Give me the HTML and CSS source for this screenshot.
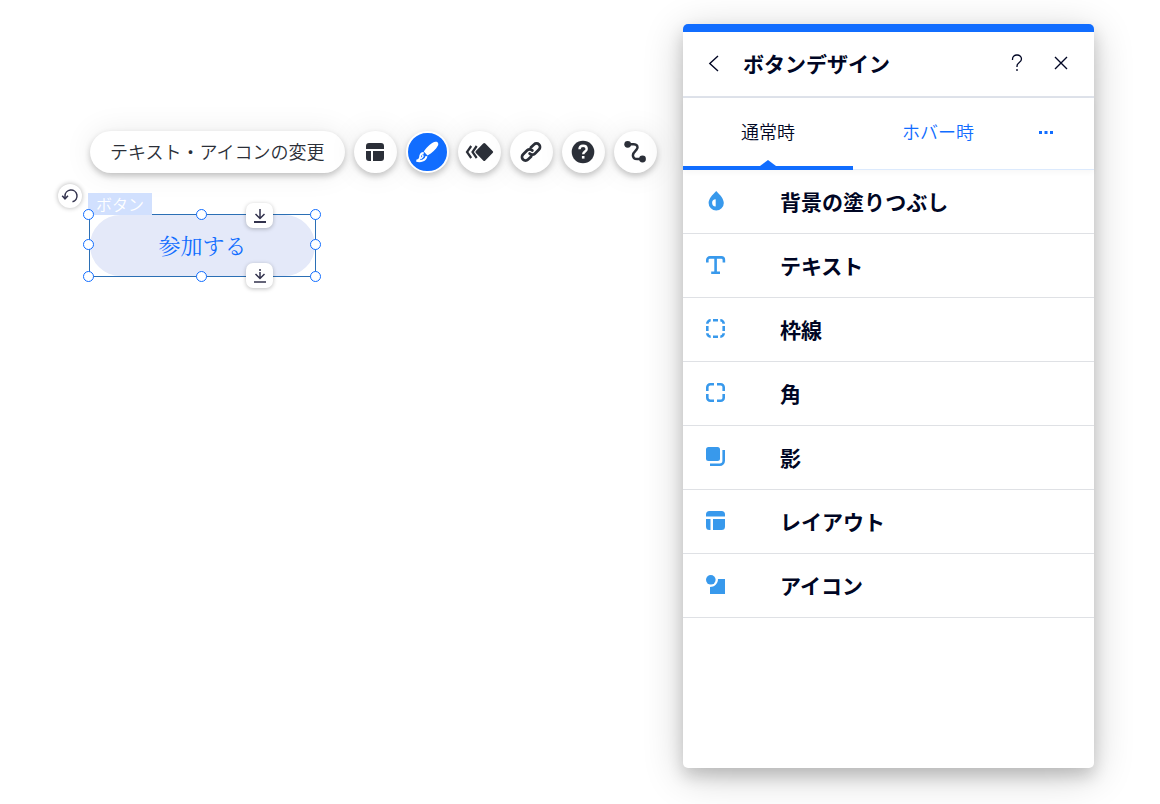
FILE: index.html
```html
<!DOCTYPE html>
<html lang="ja">
<head>
<meta charset="utf-8">
<meta name="viewport" content="width=device-width, initial-scale=1">
<title>ボタンデザイン</title>
<link rel="stylesheet" href="styles.css">
</head>
<body>
<div class="workspace">
  <main class="canvas">
    <div class="toolbar" role="toolbar" aria-label="ボタン">
      <button class="tool tool-text" type="button">テキスト・アイコンの変更</button>
      <button class="tool" type="button" aria-label="レイアウト">
        <svg width="18" height="18" viewBox="0 0 18 18" fill="currentColor"><path d="M3 0h12a3 3 0 0 1 3 3v3H0V3a3 3 0 0 1 3-3zM0 8h5v10H3a3 3 0 0 1-3-3zM7 8h11v7a3 3 0 0 1-3 3H7z"/></svg>
      </button>
      <button class="tool tool-active" type="button" aria-label="デザイン">
        <svg width="24" height="22" viewBox="0 0 24 22"><path d="M8.800 10.500C12 5.500 17 1.200 20.500 .7 23 .5 24 2.800 22.800 4.800 21 8.300 17 12 12.500 14.600z" fill="currentColor"/><path d="M8.700 12C6.200 12 5.200 14.200 5 16.500c-.2 1.800-1.500 2.900-3.500 3.300 3.500 1 9.300.2 10-4.700" fill="none" stroke="currentColor" stroke-width="1.900"/><path d="M5.500 18 8 15.500l-.4-2" fill="none" stroke="currentColor" stroke-width="1.300"/></svg>
      </button>
      <button class="tool" type="button" aria-label="アニメーション">
        <svg width="30" height="20" viewBox="0 0 30 20"><path d="M7.200 4 3 10l4.200 6M12.700 4l-4.200 6 4.200 6" fill="none" stroke="currentColor" stroke-width="2.200"/><path d="M19.200 1.600a1.500 1.500 0 0 1 2.100 0l7.300 7.300a1.500 1.500 0 0 1 0 2.200l-7.300 7.300a1.500 1.500 0 0 1-2.100 0l-7.300-7.300a1.500 1.500 0 0 1 0-2.200z" fill="currentColor"/></svg>
      </button>
      <button class="tool" type="button" aria-label="リンク">
        <svg width="24" height="24" viewBox="0 0 24 24" fill="none" stroke="currentColor" stroke-width="2.700" stroke-linecap="round"><path d="M10.600 13.500a3.600 3.600 0 0 0 5.200.2l4.200-4.200a3.500 3.500 0 0 0-5-5l-3.200 3"/><path d="M13.400 10.500a3.600 3.600 0 0 0-5.200-.2L4 14.500a3.500 3.500 0 0 0 5 5l3.200-3"/></svg>
      </button>
      <button class="tool" type="button" aria-label="ヘルプ">
        <svg width="24" height="24" viewBox="0 0 24 24"><circle cx="12" cy="12" r="11.300" fill="currentColor"/><path d="M8.500 9.300C8.500 7 10 5.800 12.100 5.800s3.600 1.300 3.600 3.200c0 2.500-3.500 2.600-3.500 5.300" fill="none" stroke="#fff" stroke-width="2.400"/><path d="M10.900 16h2.600v2.600h-2.600z" fill="#fff"/></svg>
      </button>
      <button class="tool" type="button" aria-label="パス">
        <svg width="24" height="24" viewBox="0 0 24 24"><circle cx="4.700" cy="4.300" r="3.400" fill="currentColor"/><circle cx="19.500" cy="19" r="3.400" fill="currentColor"/><path d="M4.700 4.300h5.800c4.200 0 5 3.200 3 5.400-1.400 1.600-3.600 3-3.600 5.500 0 2.800 1.800 3.800 4.300 3.800h5.300" fill="none" stroke="currentColor" stroke-width="2.500"/></svg>
      </button>
    </div>

    <div class="selection">
      <button class="cta" type="button">参加する</button>
      <span class="tag">ボタン</span>
      <button class="undo" type="button" aria-label="元に戻す">
        <svg width="18" height="18" viewBox="0 0 18 18" fill="none" stroke="currentColor" stroke-width="1.500"><path d="M4 11.500V9a6 6 0 1 1 7.500 5.800"/><path d="M1.200 8.800l2.800 3 3-3"/></svg>
      </button>
      <i class="handle top left"></i><i class="handle top center"></i><i class="handle top right"></i>
      <i class="handle middle left"></i><i class="handle middle right"></i>
      <i class="handle bottom left"></i><i class="handle bottom center"></i><i class="handle bottom right"></i>
      <button class="grip grip-top" type="button" aria-label="上へ伸縮">
        <svg width="14" height="16" viewBox="0 0 14 16" fill="none" stroke="currentColor" stroke-width="1.500"><path d="M7 1v9M2.500 6 7 10.500 11.500 6"/><path d="M1 14h12" stroke-width="2"/></svg>
      </button>
      <button class="grip grip-bottom" type="button" aria-label="下へ伸縮">
        <svg width="14" height="16" viewBox="0 0 14 16" fill="none" stroke="currentColor" stroke-width="1.500"><path d="M7 1v2M7 4v6M2.500 6 7 10.500 11.500 6"/><path d="M1 14h12"/></svg>
      </button>
    </div>
  </main>

  <aside class="panel">
    <header class="panel-head">
      <button class="icon-btn" type="button" aria-label="戻る">
        <svg width="12" height="18" viewBox="0 0 12 18" fill="none" stroke="currentColor" stroke-width="1.400"><path d="M10 2 1.800 9.500l8.200 7.500"/></svg>
      </button>
      <h1 class="panel-title">ボタンデザイン</h1>
      <button class="icon-btn" type="button" aria-label="ヘルプ">
        <svg width="12" height="18" viewBox="0 0 12 18" fill="none" stroke="currentColor" stroke-width="1.300"><path d="M1.500 6V5a4.200 4.200 0 0 1 4.500-4 4.200 4.200 0 0 1 4.500 4c0 3.500-4.500 3.500-4.500 7v1M6 15v2"/></svg>
      </button>
      <button class="icon-btn" type="button" aria-label="閉じる">
        <svg width="14" height="14" viewBox="0 0 14 14" fill="none" stroke="currentColor" stroke-width="1.400"><path d="M1 1l12 12M13 1 1 13"/></svg>
      </button>
    </header>
    <nav class="tabs">
      <button class="tab tab-active" type="button">通常時</button>
      <button class="tab" type="button">ホバー時</button>
      <button class="more" type="button" aria-label="その他">
        <svg width="16" height="4" viewBox="0 0 16 4" fill="currentColor"><path d="M1 0h3v3H1zM6.500 0h3v3h-3zM12 0h3v3h-3z"/></svg>
      </button>
    </nav>
    <ul class="list">
      <li><button class="row" type="button">
        <svg width="20" height="20" viewBox="0 0 20 20"><path d="M10.200 0C14 3.800 17.800 7.800 17.800 12a7.600 7.600 0 0 1-15.200 0c0-4.200 4-8.200 7.600-12z" fill="currentColor"/><path d="M9.700 8.200v7.200a3.600 3.600 0 0 1 0-7.200z" fill="#fff"/></svg>
        背景の塗りつぶし</button></li>
      <li><button class="row" type="button">
        <svg width="20" height="20" viewBox="0 0 20 20" fill="none" stroke="currentColor" stroke-width="2.600"><path d="M1.300 7.500V5a2.600 2.600 0 0 1 2.600-2.600h11.400A2.600 2.600 0 0 1 17.900 5v2.500M9.600 2.400V18M5.200 17.700h8.800"/></svg>
        テキスト</button></li>
      <li><button class="row" type="button">
        <svg width="20" height="20" viewBox="0 0 20 20" fill="none" stroke="currentColor" stroke-width="2.600"><path d="M1.300 4.700a3.400 3.400 0 0 1 3.400-3.400M14.300 1.300a3.400 3.400 0 0 1 3.400 3.400M17.700 14.300a3.400 3.400 0 0 1-3.400 3.400M4.700 17.700a3.400 3.400 0 0 1-3.400-3.400M7 1.300h5M7 17.700h5M1.300 7v5M17.700 7v5"/></svg>
        枠線</button></li>
      <li><button class="row" type="button">
        <svg width="20" height="20" viewBox="0 0 20 20" fill="none" stroke="currentColor" stroke-width="2.600"><path d="M1.300 8V4.300a3 3 0 0 1 3-3H8M11 1.300h3.700a3 3 0 0 1 3 3V8M17.700 11v3.700a3 3 0 0 1-3 3H11M8 17.700H4.300a3 3 0 0 1-3-3V11"/></svg>
        角</button></li>
      <li><button class="row" type="button">
        <svg width="20" height="20" viewBox="0 0 20 20"><rect width="14" height="14" rx="2.500" fill="currentColor"/><path d="M17.700 3v10.700a4 4 0 0 1-4 4H4" fill="none" stroke="currentColor" stroke-width="2.600"/></svg>
        影</button></li>
      <li><button class="row" type="button">
        <svg width="20" height="20" viewBox="0 0 20 20" fill="currentColor"><path d="M3.500 0h12A3.500 3.500 0 0 1 19 3.500V5.500H0V3.500A3.500 3.500 0 0 1 3.500 0zM0 8h4.500v11h-1A3.500 3.500 0 0 1 0 15.500zM7 8h12v7.500a3.500 3.500 0 0 1-3.500 3.500H7z"/></svg>
        レイアウト</button></li>
      <li><button class="row" type="button">
        <svg width="20" height="20" viewBox="0 0 20 20" fill="currentColor"><circle cx="4.800" cy="4.800" r="4.800"/><path d="M12 4h7v15H4v-7c4.500 0 8-3.500 8-8z"/></svg>
        アイコン</button></li>
    </ul>
  </aside>
</div>
</body>
</html>
```
FILE: styles.css
```css
* {
  box-sizing: border-box;
}

body {
  margin: 0;
  background: #fff;
  color: #000624;
  font-family: "Noto Sans CJK JP", sans-serif;
}

button {
  margin: 0;
  padding: 0;
  border: 0;
  background: none;
  color: inherit;
  font: inherit;
  cursor: pointer;
}

svg {
  display: block;
  flex: none;
}

.workspace {
  display: grid;
  grid-template-columns: minmax(593px, 1fr) minmax(320px, 411px);
  min-height: 100vh;
  padding: 24px 66px 36px 90px;
}

.canvas {
  padding-top: 107px;
}

.toolbar {
  display: flex;
  gap: 9px;
}

.tool {
  display: flex;
  align-items: center;
  justify-content: center;
  width: 43px;
  height: 42px;
  border-radius: 22px;
  background: #fff;
  color: #2b2f38;
  box-shadow: 0 3px 6px rgba(0, 0, 0, 0.22), 0 0 30px rgba(0, 0, 0, 0.08);
}

.tool-text {
  width: auto;
  padding: 0 20px 2px;
  font-size: 18px;
  font-weight: 350;
  white-space: nowrap;
}

.tool-active {
  border: 2px solid #fff;
  background: #116dff;
  color: #fff;
}

.selection {
  position: relative;
  width: 227px;
  margin: 41px 0 0 -1px;
  border: 1px solid #2b6fb5;
}

.cta {
  display: block;
  width: 100%;
  height: 61px;
  padding-bottom: 2px;
  border-radius: 31px;
  background: #e4e9f9;
  color: #116dff;
  font-family: "Noto Serif CJK JP", "Liberation Serif", "Noto Sans CJK JP", serif;
  font-size: 22px;
  font-weight: 400;
}

.tag {
  position: absolute;
  left: -2px;
  bottom: 100%;
  height: 22px;
  padding: 0 8px;
  background: #d1e0fe;
  color: #fff;
  font-size: 16px;
  font-weight: 350;
  line-height: 22px;
}

.undo {
  position: absolute;
  top: -31px;
  left: -32px;
  display: grid;
  place-items: center;
  width: 24px;
  height: 24px;
  border-radius: 50%;
  background: #fff;
  color: #32324d;
  box-shadow: 0 0 5px rgba(0, 0, 0, 0.3);
}

.handle {
  position: absolute;
  width: 11px;
  height: 11px;
  border: 1px solid #116dff;
  border-radius: 50%;
  background: #fff;
}

.top { top: -6px; }
.middle { top: 24px; }
.bottom { bottom: -6px; }
.left { left: -7px; }
.center { left: 106px; }
.right { right: -6px; }

.grip {
  position: absolute;
  left: 156px;
  display: grid;
  place-items: center;
  width: 27px;
  height: 25px;
  border-radius: 7px;
  background: #fff;
  color: #32324d;
  box-shadow: 0 1px 4px rgba(0, 0, 0, 0.25);
}

.grip-top { top: -12px; }
.grip-bottom { bottom: -12px; }

.panel {
  border-top: 8px solid #116dff;
  border-radius: 5px;
  background: #fff;
  box-shadow: 0 8px 16px rgba(0, 0, 0, 0.16), 0 8px 40px rgba(0, 0, 0, 0.2);
}

.panel-head {
  display: flex;
  align-items: center;
  height: 66px;
  padding: 0 21px 2px 19px;
  border-bottom: 2px solid #dfe3eb;
}

.icon-btn {
  display: grid;
  place-items: center;
  width: 24px;
  height: 32px;
  margin-left: 20px;
}

.icon-btn:first-child {
  margin-left: 0;
}

.panel-title {
  flex: 1;
  margin: 0 0 0 17px;
  font-size: 21px;
  font-weight: 700;
}

.tabs {
  display: flex;
  height: 72px;
  padding-right: 25px;
  border-bottom: 1px solid #dceafd;
  box-shadow: 0 2px 6px rgba(0, 0, 0, 0.04);
}

.tab {
  position: relative;
  flex: 1;
  height: 72px;
  padding-bottom: 6px;
  color: #116dff;
  font-size: 18px;
  font-weight: 350;
}

.tab-active {
  border-bottom: 4px solid #116dff;
  padding-bottom: 2px;
  color: #000624;
}

.tab-active::after {
  content: "";
  position: absolute;
  bottom: 0;
  left: 50%;
  margin-left: -8px;
  border: 8px solid transparent;
  border-top-width: 0;
  border-bottom: 6px solid #116dff;
}

.more {
  display: grid;
  place-items: center;
  width: 46px;
  padding-bottom: 2px;
  color: #116dff;
}

.list {
  margin: 0;
  padding: 0;
  list-style: none;
}

.row {
  display: flex;
  align-items: center;
  gap: 54px;
  width: 100%;
  height: 64px;
  padding: 0 23px 2px;
  border-bottom: 1px solid #dfe1e5;
  font-size: 21px;
  font-weight: 700;
  text-align: left;
}

.row svg {
  color: #3899ec;
}
```
